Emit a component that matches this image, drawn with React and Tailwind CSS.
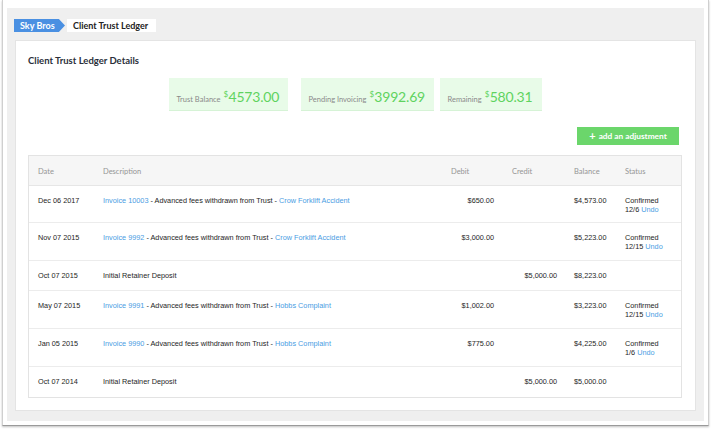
const rows = [
    { date: 'Dec 06 2017', invoice: 'Invoice 10003', matter: 'Crow Forklift Accident', debit: '$650.00', credit: '', balance: '$4,573.00', status: '12/6', h: 'h-[37px]' },
    { date: 'Nov 07 2015', invoice: 'Invoice 9992', matter: 'Crow Forklift Accident', debit: '$3,000.00', credit: '', balance: '$5,223.00', status: '12/15', h: 'h-[38px]' },
    { date: 'Oct 07 2015', text: 'Initial Retainer Deposit', debit: '', credit: '$5,000.00', balance: '$8,223.00', h: 'h-[30px]' },
    { date: 'May 07 2015', invoice: 'Invoice 9991', matter: 'Hobbs Complaint', debit: '$1,002.00', credit: '', balance: '$3,223.00', status: '12/15', h: 'h-[38px]' },
    { date: 'Jan 05 2015', invoice: 'Invoice 9990', matter: 'Hobbs Complaint', debit: '$775.00', credit: '', balance: '$4,225.00', status: '1/6', h: 'h-[38px]' },
    { date: 'Oct 07 2014', text: 'Initial Retainer Deposit', debit: '', credit: '$5,000.00', balance: '$5,000.00', h: 'h-[30px]' },
];

const lato = { fontFamily: 'Lato, "Open Sans", sans-serif' };

function Stat({ label, value, className = '' }) {
    return (
        <div className={`flex h-[33px] items-center border-b border-[#d6f3d6] bg-[#e8fbe8] pl-[8px] ${className}`}>
            <p className="whitespace-nowrap pt-[3px] leading-none" style={lato}>
                <span className="text-[7.5px] text-[#8a8a8a]">{label}</span>
                <span className="ml-[3px] text-[14px] tracking-[-0.2px] text-[#5fd35f]">
                    <span className="relative top-[-5px] mr-[0.5px] text-[8px]">$</span>
                    {value}
                </span>
            </p>
        </div>
    );
}

export default function App() {
    return (
        <div className="h-[429px] w-[711px] overflow-hidden bg-white pl-[2px]">
            <div className="h-[426px] w-[707px] border-x border-b border-x-[#cfcfcf] border-b-[#9a9a9a] bg-white px-[4px] pb-[4px] pt-[8px] shadow-[0_1px_2px_rgba(0,0,0,0.25)]">
                <div className="h-[413px] bg-[#efefef] px-[8px] pt-[11px]">
                    {/* breadcrumb */}
                    <div className="ml-[-1px] flex h-[13px] items-stretch text-[9px] font-bold" style={lato}>
                        <div className="flex w-[51px] items-center bg-[#4a90e2] pl-[6px] text-white [clip-path:polygon(0_0,88%_0,100%_50%,88%_100%,0_100%)]">
                            Sky Bros
                        </div>
                        <div className="ml-[2px] flex w-[89px] items-center bg-white pl-[6px] text-[#222]">
                            Client Trust Ledger
                        </div>
                    </div>

                    {/* card */}
                    <div className="mt-[8px] h-[371px] border border-[#e4e4e4] bg-white pl-[12px] pr-[13px] pt-[14px]">
                        <h1 className="text-[9.5px] font-bold leading-[12px] text-[#2a2f3a]" style={lato}>
                            Client Trust Ledger Details
                        </h1>

                        <div className="mt-[11px] flex justify-center">
                            <Stat label="Trust Balance" value="4573.00" className="w-[119px]" />
                            <Stat label="Pending Invoicing" value="3992.69" className="ml-[13px] w-[133px]" />
                            <Stat label="Remaining" value="580.31" className="ml-[6px] w-[102px]" />
                        </div>

                        <div className="mt-[16px] flex justify-end pr-[3px]">
                            <button className="flex h-[18px] w-[102px] items-center justify-center bg-[#6bd66b] text-[8.3px] font-bold text-white" style={lato}>
                                <span className="mr-[3px] text-[11px] leading-[10px]">+</span>
                                add an adjustment
                            </button>
                        </div>

                        <div className="mt-[10px] border border-[#e3e3e3]" style={{ fontFamily: '"Liberation Sans", Arial, sans-serif' }}>
                            <div
                                className="grid h-[30px] grid-cols-[65px_348px_61px_62px_51px_66px] items-center border-b border-[#e6e6e6] bg-[#f6f6f6] text-[7.5px] text-[#959595]"
                                style={lato}
                            >
                                <div className="pl-[9px] pt-[3px]">Date</div>
                                <div className="pl-[9px] pt-[3px]">Description</div>
                                <div className="pl-[9px] pt-[3px]">Debit</div>
                                <div className="pl-[9px] pt-[3px]">Credit</div>
                                <div className="pl-[9px] pt-[3px]">Balance</div>
                                <div className="pl-[9px] pt-[3px]">Status</div>
                            </div>
                            {rows.map((r, i) => (
                                <div
                                    key={i}
                                    className={`grid grid-cols-[65px_348px_61px_62px_51px_66px] items-start pt-[11px] text-[7.3px] leading-[8.5px] text-[#1e1e1e] ${r.h} ${i < rows.length - 1 ? 'border-b border-[#ececec]' : ''}`}
                                >
                                    <div className="pl-[9px]">{r.date}</div>
                                    <div className="pl-[9px]">
                                        {r.text ? (
                                            r.text
                                        ) : (
                                            <>
                                                <span className="text-[#4a9de3]">{r.invoice}</span> - Advanced fees withdrawn from Trust -{' '}
                                                <span className="text-[#4a9de3]">{r.matter}</span>
                                            </>
                                        )}
                                    </div>
                                    <div className="pr-[9px] text-right">{r.debit}</div>
                                    <div className="pr-[8px] text-right">{r.credit}</div>
                                    <div className="pl-[9px]">{r.balance}</div>
                                    <div className="pl-[9px]">
                                        {r.status ? (
                                            <>
                                                <div>Confirmed</div>
                                                <div>
                                                    {r.status} <span className="text-[#4a9de3]">Undo</span>
                                                </div>
                                            </>
                                        ) : null}
                                    </div>
                                </div>
                            ))}
                        </div>
                    </div>
                </div>
            </div>
        </div>
    );
}
